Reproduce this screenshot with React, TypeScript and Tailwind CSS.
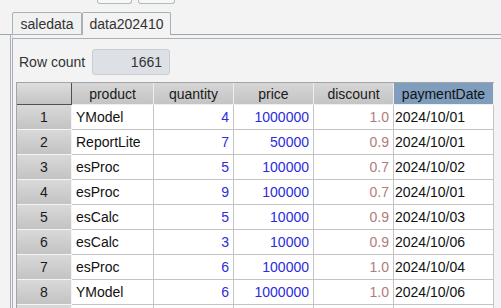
import React from "react";

type Row = [string, string, string, string, string];

const ROWS: Row[] = [
  ["YModel", "4", "1000000", "1.0", "2024/10/01"],
  ["ReportLite", "7", "50000", "0.9", "2024/10/01"],
  ["esProc", "5", "100000", "0.7", "2024/10/02"],
  ["esProc", "9", "100000", "0.7", "2024/10/01"],
  ["esCalc", "5", "10000", "0.9", "2024/10/03"],
  ["esCalc", "3", "10000", "0.9", "2024/10/06"],
  ["esProc", "6", "100000", "1.0", "2024/10/04"],
  ["YModel", "6", "1000000", "1.0", "2024/10/06"],
  ["", "", "", "", ""],
];

const HEADERS = ["product", "quantity", "price", "discount"];
const WIDTHS = ["w-[82px]", "w-[80px]", "w-[80px]", "w-[80px]"];

export default function App() {
  return (
    <div
      className="w-[501px] h-[308px] overflow-hidden bg-[#f2f3f2] text-[14px] leading-none text-[#222]"
      style={{ fontFamily: '"Liberation Sans", Arial, sans-serif' }}
    >
      {/* toolbar buttons, cut off at the top */}
      <div className="flex h-[4px]">
        <div className="ml-[97px] w-[35px] h-[4px] border border-t-0 border-[#b4b9be] rounded-b-[3px] bg-[#f6f7f7]" />
        <div className="ml-[6px] w-[37px] h-[4px] border border-t-0 border-[#b4b9be] rounded-b-[3px] bg-[#f6f7f7]" />
      </div>

      {/* tabs */}
      <div className="flex items-end h-[31px]">
        <div className="w-[12px] h-full border-b border-[#9ea6ae]" />
        <div className="w-[70px] h-[23px] flex items-center justify-center border border-[#a9b0b7] rounded-t-[2px] bg-[#f0f1f1] text-[#333]">
          saledata
        </div>
        <div className="w-[89px] h-[23px] flex items-center justify-center border border-b-0 border-[#a9b0b7] rounded-t-[2px] bg-[#f2f3f2] text-[#333]">
          data202410
        </div>
        <div className="flex-1 h-full border-b border-[#9ea6ae]" />
      </div>

      {/* panel */}
      <div className="ml-[10px] h-full border-l border-[#a9b0b7]">
        <div className="h-[3px] ml-[1px] border-l border-[#d4d8dc]" />
        <div className="ml-[1px] h-full border-t border-l border-[#a9b0b7]">
          <div className="flex items-center pt-[10px]">
            <div className="w-[79px] pl-[6px] text-[#333]">Row count</div>
            <div className="w-[78px] h-[26px] flex items-center justify-end pr-[7px] rounded-[3px] border border-[#c9cdd2] bg-[#dde0e5] text-[#333]">
              1661
            </div>
          </div>

          {/* table */}
          <div className="mt-[7px] ml-[3px] w-[478px] border-l border-t border-[#a4a4a4]">
            <div className="flex h-[22px]">
              <div className="w-[55px] h-full border-r border-b border-[#505050] bg-gradient-to-b from-[#dedede] to-[#c4c4c4]" />
              {HEADERS.map((h, i) => (
                <div
                  key={h}
                  className={`${WIDTHS[i]} h-full flex items-center justify-center border-r border-b border-[#eeeeee] bg-gradient-to-b from-[#d6d6d6] to-[#c4c4c4] text-[#1a1a1a]`}
                >
                  {h}
                </div>
              ))}
              <div className="w-[100px] h-full flex items-center justify-center border-r border-b border-[#eeeeee] bg-[#7f9dbd] text-[#111]">
                paymentDate
              </div>
            </div>
            {ROWS.map((r, i) => (
              <div key={i} className="flex h-[25px]">
                <div className="w-[55px] h-full flex items-center justify-center border-r border-b border-[#f4f4f4] bg-gradient-to-b from-[#d9d9d9] to-[#c3c3c3] text-[#1a1a1a]">
                  {r[0] ? i + 1 : ""}
                </div>
                <div className="w-[82px] h-full flex items-center pl-[4px] border-r border-b border-[#c4c4c4] bg-white text-[#111]">
                  {r[0]}
                </div>
                <div className="w-[80px] h-full flex items-center justify-end pr-[4px] border-r border-b border-[#c4c4c4] bg-white text-[#2b2be0]">
                  {r[1]}
                </div>
                <div className="w-[80px] h-full flex items-center justify-end pr-[4px] border-r border-b border-[#c4c4c4] bg-white text-[#2b2be0]">
                  {r[2]}
                </div>
                <div className="w-[80px] h-full flex items-center justify-end pr-[4px] border-r border-b border-[#c4c4c4] bg-white text-[#b07c7c]">
                  {r[3]}
                </div>
                <div className="w-[100px] h-full flex items-center pl-[1px] border-r border-b border-[#c4c4c4] bg-white text-[#111]">
                  {r[4]}
                </div>
              </div>
            ))}
          </div>
        </div>
      </div>
    </div>
  );
}
